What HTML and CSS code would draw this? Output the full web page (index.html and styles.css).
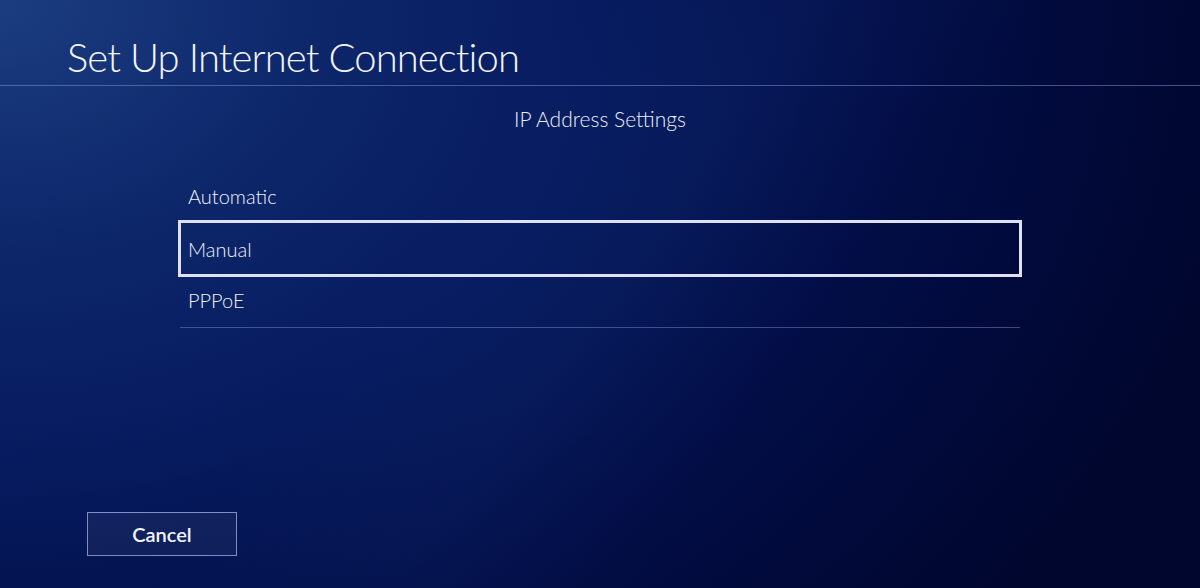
FILE: index.html
```html
<!DOCTYPE html>
<html lang="en">
<head>
<meta charset="utf-8">
<title>Set Up Internet Connection</title>
<link rel="stylesheet" href="styles.css">
</head>
<body>
<div class="screen">
  <header class="header">
    <h1 class="title">Set Up Internet Connection</h1>
  </header>
  <h2 class="subtitle">IP Address Settings</h2>
  <ul class="options">
    <li class="option">Automatic</li>
    <li class="option selected">Manual</li>
    <li class="option last">PPPoE</li>
  </ul>
  <div class="spacer"></div>
  <footer class="footer">
    <button class="cancel" type="button">Cancel</button>
  </footer>
</div>
</body>
</html>
```

FILE: styles.css
```css
html, body {
  margin: 0;
  padding: 0;
}

body {
  width: 1200px;
  height: 588px;
  overflow: hidden;
  font-family: "Lato", "Open Sans", sans-serif;
  color: #eef0fa;
  background:
    linear-gradient(125deg, rgba(40, 80, 160, 0) 35%, rgba(40, 80, 160, 0.08) 50%, rgba(40, 80, 160, 0) 65%),
    radial-gradient(ellipse 105% 165% at 0% 0%, #1b3d80 0%, #0d266a 26%, #061b5e 48%, #020e48 70%, #00062e 100%);
}

.screen {
  height: 588px;
  display: flex;
  flex-direction: column;
}

.header {
  height: 52px;
  padding: 33px 0 0 67px;
  border-bottom: 1px solid rgba(120, 140, 205, 0.55);
}

.title {
  margin: 0;
  font-size: 40px;
  line-height: 48px;
  font-weight: 300;
  letter-spacing: -0.9px;
  color: #f4f5fb;
}

.subtitle {
  margin: 20px 0 0;
  text-align: center;
  font-size: 21px;
  line-height: 25px;
  font-weight: 300;
  color: #eceef8;
}

.options {
  list-style: none;
  margin: 38px 0 0 180px;
  padding: 0;
  width: 840px;
}

.option {
  height: 53px;
  display: flex;
  align-items: center;
  padding-left: 8px;
  font-size: 20px;
  font-weight: 300;
  color: #f0f2fa;
}

.option.selected {
  outline: 3px solid #dde1f2;
  outline-offset: -1px;
}

.option.last {
  height: 50px;
  padding-bottom: 2px;
  border-bottom: 1px solid rgba(110, 125, 190, 0.55);
}

.spacer {
  flex: 1;
}

.footer {
  padding: 0 0 32px 87px;
}

.cancel {
  display: block;
  width: 150px;
  height: 44px;
  margin: 0;
  padding: 0;
  border: 1px solid rgba(150, 160, 210, 0.85);
  background: rgba(255, 255, 255, 0.05);
  font-family: "Lato", "Open Sans", sans-serif;
  font-size: 20px;
  font-weight: 600;
  color: #f2f4fb;
}
```
